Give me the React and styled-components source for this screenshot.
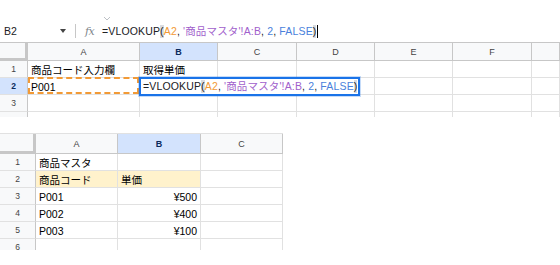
import React from 'react';
import styled, { createGlobalStyle } from 'styled-components';

const GlobalStyle = createGlobalStyle`
  html, body { margin: 0; padding: 0; background: #fff; }
  body { font-family: "Liberation Sans", Arial, "Noto Sans CJK JP", sans-serif; }
  * { box-sizing: border-box; }
`;

const FONT = `"Liberation Sans", Arial, "Noto Sans CJK JP", sans-serif`;

const Page = styled.div`
  width: 560px;
  height: 265px;
  overflow: hidden;
  padding-top: 20px;
  display: flex;
  flex-direction: column;
  font-family: ${FONT};
`;

const FormulaBar = styled.div`
  height: 23px;
  display: flex;
  align-items: center;
  border-bottom: 1px solid #c7c7c7;
`;

const NameBox = styled.div`
  width: 75px;
  display: flex;
  align-items: center;
  justify-content: space-between;
  padding: 0 9px 0 4px;
  font-size: 10.5px;
  color: #202124;
`;

const Caret = styled.span`
  width: 0;
  height: 0;
  border-left: 3.5px solid transparent;
  border-right: 3.5px solid transparent;
  border-top: 4px solid #444;
`;

const Divider = styled.div`
  width: 1px;
  height: 14px;
  background: #c7c7c7;
`;

const Fx = styled.span`
  margin-left: 9px;
  width: 17px;
  font-family: "DejaVu Serif", "Liberation Serif", serif;
  font-style: italic;
  color: #80868b;
  font-size: 11px;
  letter-spacing: -0.5px;
`;

const FormulaLine = styled.div`
  position: relative;
  display: flex;
  align-items: center;
  font-size: 10.5px;
  white-space: nowrap;
  color: #202124;
  letter-spacing: 0.15px;
`;

const Handle = styled.svg`
  position: absolute;
  left: 1px;
  top: -9px;
`;

const TOKEN_COLORS = {
  plain: '#202124',
  ref1: '#f29a36',
  ref2: '#a15fcc',
  num: '#4a7fdc',
  paren: '#202124',
};

const Tok = styled.span`
  color: ${p => TOKEN_COLORS[p.$kind]};
  background: ${p => (p.$kind === 'paren' ? '#dadce0' : 'transparent')};
  line-height: 13px;
`;

const Cursor = styled.span`
  display: inline-block;
  width: 1px;
  height: 13px;
  margin-left: 1px;
  background: #000;
`;

const TOKENS = [
  ['plain', '=VLOOKUP'],
  ['paren', '('],
  ['ref1', 'A2'],
  ['plain', ',\u00a0'],
  ['ref2', "'商品マスタ'!A:B"],
  ['plain', ',\u00a0'],
  ['num', '2'],
  ['plain', ',\u00a0'],
  ['num', 'FALSE'],
  ['paren', ')'],
];

function Formula({ cursor }) {
  return (
    <>
      {TOKENS.map(([k, t], i) => (
        <Tok key={i} $kind={k}>{t}</Tok>
      ))}
      {cursor && <Cursor />}
    </>
  );
}

const SheetFrame = styled.div`
  position: relative;
  height: ${p => p.$height}px;
  margin-top: ${p => p.$gap || 0}px;
  overflow: hidden;
  flex: none;
`;

const Grid = styled.div`
  display: grid;
  grid-template-columns: ${p => p.$cols};
  grid-template-rows: ${p => p.$headH}px;
  grid-auto-rows: 17px;
  border-top: ${p => (p.$topLine ? '1px solid #e1e1e1' : 'none')};
  width: ${p => p.$width || 'auto'};
`;

const Corner = styled.div`
  background: #f8f9fa;
  border-right: 3px solid #c7c7c7;
  border-bottom: 3px solid #c7c7c7;
`;

const ColHead = styled.div`
  background: ${p => (p.$active ? '#d3e3fd' : '#f8f9fa')};
  border-right: 1px solid #c7c7c7;
  border-bottom: 1px solid #c7c7c7;
  display: flex;
  align-items: center;
  justify-content: center;
  font-size: 9px;
  color: ${p => (p.$active ? '#0b2a5c' : '#444')};
  font-weight: ${p => (p.$active ? 700 : 400)};
`;

const RowHead = styled.div`
  background: ${p => (p.$active ? '#d3e3fd' : '#f8f9fa')};
  border-right: 1px solid #c7c7c7;
  border-bottom: 1px solid #e1e1e1;
  display: flex;
  align-items: center;
  justify-content: center;
  font-size: 8.5px;
  color: ${p => (p.$active ? '#0b2a5c' : '#444')};
  font-weight: ${p => (p.$active ? 700 : 400)};
`;

const Cell = styled.div`
  position: relative;
  background: ${p => p.$bg || '#fff'};
  border-right: 1px solid #e1e1e1;
  border-bottom: 1px solid #e1e1e1;
  display: flex;
  align-items: center;
  justify-content: ${p => (p.$right ? 'flex-end' : 'flex-start')};
  padding: 1px 3px 0;
  font-size: 10.5px;
  color: #000;
  white-space: nowrap;
  overflow: visible;

  &::after {
    content: '';
    display: ${p => (p.$dashed ? 'block' : 'none')};
    position: absolute;
    top: -1px;
    left: 0;
    right: 0;
    bottom: 0;
    border: 2px dashed #f29a36;
    pointer-events: none;
  }
`;

const Editor = styled.div`
  position: absolute;
  left: ${p => p.$left}px;
  top: ${p => p.$top}px;
  width: 221px;
  height: 19px;
  border: 2px solid #1a73e8;
  box-shadow: 0 0 0 1px rgba(26, 115, 232, 0.25);
  background: #fff;
  display: flex;
  align-items: center;
  padding-left: 2px;
  font-size: 10.5px;
  white-space: nowrap;
`;

const TOP_COLS = ['A', 'B', 'C', 'D', 'E', 'F', ''];
const topRows = [
  ['商品コード入力欄', '取得単価', '', '', '', '', ''],
  ['P001', '', '', '', '', '', ''],
  ['', '', '', '', '', '', ''],
  ['', '', '', '', '', '', ''],
];

const masterRows = [
  [{ t: '商品マスタ' }, { t: '' }, { t: '' }],
  [{ t: '商品コード', bg: '#fff2cc' }, { t: '単価', bg: '#fff2cc' }, { t: '' }],
  [{ t: 'P001' }, { t: '¥500', right: true }, { t: '' }],
  [{ t: 'P002' }, { t: '¥400', right: true }, { t: '' }],
  [{ t: 'P003' }, { t: '¥100', right: true }, { t: '' }],
  [{ t: '' }, { t: '' }, { t: '' }],
];

export default function App() {
  return (
    <>
      <GlobalStyle />
      <Page>
        <FormulaBar>
          <NameBox>
            <span>B2</span>
            <Caret />
          </NameBox>
          <Divider />
          <Fx>fx</Fx>
          <FormulaLine>
            <Handle width="8" height="5" viewBox="0 0 8 5">
              <path d="M1 1 L4 4 L7 1" fill="none" stroke="#bdc1c6" strokeWidth="1" />
            </Handle>
            <Formula cursor />
          </FormulaLine>
        </FormulaBar>

        <SheetFrame $height={74}>
          <Grid $cols="28px 112px 78px 79px 78px 78px 79px 1fr" $headH={18}>
            <Corner />
            {TOP_COLS.map((c, i) => (
              <ColHead key={i} $active={c === 'B'}>{c}</ColHead>
            ))}
            {topRows.map((row, r) => (
              <React.Fragment key={r}>
                <RowHead $active={r === 1}>{r + 1}</RowHead>
                {row.map((v, c) => (
                  <Cell key={c} $dashed={r === 1 && c === 0}>{v}</Cell>
                ))}
              </React.Fragment>
            ))}
          </Grid>
          <Editor $left={139} $top={34}>
            <FormulaLine>
              <Formula />
            </FormulaLine>
          </Editor>
        </SheetFrame>

        <SheetFrame $height={117} $gap={16}>
          <Grid $cols="36px 82px 83px 82px" $headH={20} $topLine $width="283px">
            <Corner />
            {['A', 'B', 'C'].map(c => (
              <ColHead key={c} $active={c === 'B'}>{c}</ColHead>
            ))}
            {masterRows.map((row, r) => (
              <React.Fragment key={r}>
                <RowHead>{r + 1}</RowHead>
                {row.map((cell, c) => (
                  <Cell key={c} $bg={cell.bg} $right={cell.right}>{cell.t}</Cell>
                ))}
              </React.Fragment>
            ))}
          </Grid>
        </SheetFrame>
      </Page>
    </>
  );
}
